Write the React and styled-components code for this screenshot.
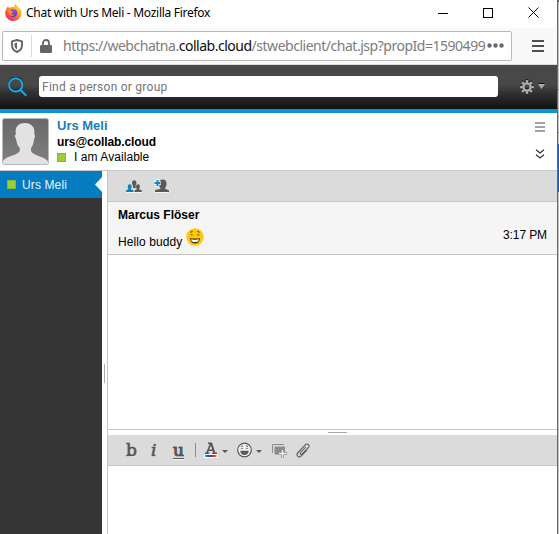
import React from "react";
import styled, { createGlobalStyle } from "styled-components";

const GlobalStyle = createGlobalStyle`
  * { box-sizing: border-box; }
  html, body { margin: 0; overflow: hidden; background: #fff; }
  svg { display: block; flex: none; }
`;

const Screen = styled.div`
  display: grid;
  grid-template-columns: 557px 1px 1px;
  width: 559px;
  height: 534px;
  overflow: hidden;
  font-family: "Liberation Sans", Arial, sans-serif;
  font-size: 12px;
  color: #000;
`;

const Window = styled.div`
  display: flex;
  flex-direction: column;
  min-width: 0;
  height: 534px;
  background: #fff;
`;

const WindowEdge = styled.div`
  background: #686868;
`;

const Desktop = styled.div`
  background: linear-gradient(
    #35577c 0 2px, #c3c3c3 2px 89px, #8f8f8f 89px 90px, #c3c3c3 90px 132px,
    #8f8f8f 132px 133px, #c3c3c3 133px 144px, #1f5ba8 144px 192px, #c3c3c3 192px
  );
`;

const TitleBar = styled.header`
  display: flex;
  align-items: center;
  flex: none;
  height: 28px;
  padding: 0 18px 3px 5px;
`;

const WindowTitle = styled.div`
  flex: 1;
  margin-left: 4px;
  font: 12px/16px "Noto Sans", "Open Sans", sans-serif;
  letter-spacing: -0.28px;
  white-space: nowrap;
`;

const WindowControls = styled.div`
  display: flex;
  align-items: center;
  gap: 35px;
`;

const AddressBar = styled.div`
  display: flex;
  align-items: center;
  flex: none;
  height: 37px;
  padding: 0 13px 1px 2px;
  border-bottom: 1px solid #dcdcdc;
  background: #f9f9fa;
`;

const UrlField = styled.div`
  display: flex;
  align-items: center;
  width: 510px;
  height: 30px;
  margin-right: 20px;
  padding: 0 5px 0 8px;
  border: 1px solid #b9b9bb;
  border-radius: 2px;
  background: #fff;
`;

const UrlDivider = styled.i`
  width: 1px;
  height: 22px;
  margin: 0 8px 0 8px;
  background: #dcdcdc;
`;

const Url = styled.div`
  flex: 1;
  min-width: 0;
  margin-left: 11px;
  font: 14px/20px "Noto Sans", "Open Sans", sans-serif;
  letter-spacing: -0.48px;
  white-space: nowrap;
  color: #7c7c7c;
`;

const Domain = styled.span`
  color: #0c0c0d;
`;

const SearchHeader = styled.div`
  display: flex;
  align-items: center;
  flex: none;
  height: 48px;
  padding: 0 12px 1px 8px;
  border-bottom: 4px solid #0b93d4;
  background: linear-gradient(#484848 0 20px, #333 27px, #111 44px);
  box-shadow: inset 0 -1px #111;
`;

const SearchInput = styled.input`
  width: 459px;
  height: 21px;
  margin: 0 22px 0 12px;
  padding: 0 3px;
  border: 0;
  border-radius: 3px;
  background: #fff;
  font: 12px "Roboto", sans-serif;
  letter-spacing: 0.25px;
  &::placeholder { color: #757575; opacity: 1; }
`;

const Contact = styled.section`
  display: flex;
  flex: none;
  height: 58px;
  padding: 5px 12px 0 2px;
  border-bottom: 1px solid #c6c6c6;
`;

const ContactInfo = styled.div`
  display: flex;
  flex: 1;
  flex-direction: column;
  margin-left: 8px;
`;

const ContactName = styled.div`
  height: 16px;
  font: bold 13px/16px "Liberation Sans", Arial, sans-serif;
  color: #1a7fb8;
`;

const ContactMail = styled.div`
  height: 15px;
  font-weight: bold;
  line-height: 16px;
  letter-spacing: -0.08px;
`;

const ContactStatus = styled.div`
  display: flex;
  align-items: center;
  gap: 8px;
  height: 16px;
  line-height: 16px;
  letter-spacing: 0.06px;
`;

const Presence = styled.i`
  width: 9px;
  height: 9px;
  border: 1px solid #86b62b;
  background: #9cce38;
`;

const ContactActions = styled.div`
  display: flex;
  flex-direction: column;
  align-items: flex-end;
  gap: 17px;
  padding-top: 4px;
`;

const Workspace = styled.div`
  display: grid;
  grid-template-columns: 102px 5px 1fr;
  flex: 1;
  min-height: 0;
`;

const Sidebar = styled.nav`
  background: #353535;
`;

const ChatTab = styled.div`
  display: flex;
  align-items: center;
  height: 27px;
  padding-left: 7px;
  background: #057cc0;
  color: #fff;
`;

const TabLabel = styled.span`
  flex: 1;
  margin-left: 6px;
  color: #e9f4fb;
  letter-spacing: 0.12px;
`;

const Splitter = styled.div`
  display: flex;
  justify-content: center;
  padding-top: 193px;
`;

const SplitterGrip = styled.i`
  width: 1px;
  height: 19px;
  background: #ababab;
`;

const ChatPane = styled.main`
  display: flex;
  flex-direction: column;
  min-width: 0;
  border-left: 1px solid #c6c6c6;
`;

const Toolbar = styled.div`
  display: flex;
  align-items: center;
  flex: none;
  height: 31px;
  padding-left: ${(p) => p.$inset}px;
  border-bottom: 1px solid #c6c6c6;
  background: #dbdbdb;
`;

const Message = styled.article`
  display: flex;
  flex: none;
  justify-content: space-between;
  height: 53px;
  padding: 5px 10px 0;
  border-bottom: 1px solid #c6c6c6;
  background: #f5f5f5;
`;

const Author = styled.div`
  font-weight: bold;
  line-height: 16px;
`;

const MessageText = styled.div`
  display: flex;
  gap: 4px;
  padding-top: 5px;
  line-height: 29px;
  letter-spacing: 0.1px;
`;

const Time = styled.time`
  padding-top: 20px;
  line-height: 16px;
  letter-spacing: -0.1px;
`;

const History = styled.div`
  flex: none;
  height: 175px;
  border-bottom: 1px solid #c6c6c6;
`;

const ComposeGrip = styled.div`
  display: flex;
  flex: none;
  height: 5px;
  padding: 2px 0 0 220px;
  &::before { content: ""; width: 19px; height: 1px; background: #ababab; }
`;

const FormatButton = styled.button`
  width: ${(p) => p.$width}px;
  height: 20px;
  padding: 0;
  border: 0;
  background: none;
  color: #555;
  font: ${(p) => (p.$italic ? "italic " : "")}17px/20px "DejaVu Serif", serif;
  -webkit-text-stroke: 0.7px #555;
  text-shadow: 0 1px #f4f4f4;
  text-decoration: ${(p) => (p.$underline ? "underline" : "none")};
  text-decoration-thickness: 1px;
  text-underline-offset: 2px;
  text-align: left;
`;

const FormatDivider = styled.i`
  width: 1px;
  height: 14px;
  margin-right: 8px;
  background: #8b8b8b;
`;

const IconSlot = styled.span`
  margin-right: ${(p) => p.$after}px;
`;

const FirefoxIcon = () => (
  <svg width="17" height="17" viewBox="0 0 17 17">
    <defs>
      <linearGradient id="fox" x1="1" y1="0" x2="0.25" y2="1">
        <stop offset="0" stopColor="#fff044" />
        <stop offset=".35" stopColor="#ffb52c" />
        <stop offset=".65" stopColor="#ff6c35" />
        <stop offset="1" stopColor="#ef2463" />
      </linearGradient>
      <linearGradient id="globe" x1="0" y1="0" x2="0" y2="1">
        <stop offset="0" stopColor="#9a48e4" />
        <stop offset="1" stopColor="#5142b4" />
      </linearGradient>
    </defs>
    <path d="M3 2.200C3.300 3 3.700 3.400 4.300 3.800 6 2.800 7.600 3 8.700 3.200 8.800 1.800 9.600.6 10.800 0c.5 2 3.200 2.900 3.700 5 .2-.3.2-.9.1-1.300C16.500 6 17.100 9 16 11.800c-1.200 3-4 5.200-7.400 5.200C4 17 .2 13.600.2 9.200.2 6.500 1.300 4.200 3 2.200z" fill="url(#fox)" />
    <path d="M5.200 6.600C6.600 4.700 9.800 4.700 11.500 6.600c2 2.500.6 6.400-2.900 6.600-2.800.1-4.600-2-4.300-4.300 1 .6 2.300.3 3.300-.6-.9-.2-1.900-.7-2.400-1.700z" fill="url(#globe)" />
    <path d="M2.800 6.200C4 5.800 5 6 5.800 6.700 6.800 7 8 7.200 8.600 7.700 7.500 8 7 9.100 5.900 9.400c.7 1.200 2.500 1.500 3.800.8-1.500 2.600-5.700 1.900-6.300-1z" fill="#ff9228" />
  </svg>
);

const MinimizeIcon = () => (
  <svg width="10" height="10"><path d="M0 5.500h10" stroke="#000" /></svg>
);
const MaximizeIcon = () => (
  <svg width="10" height="10"><rect x=".5" y=".5" width="9" height="9" fill="none" stroke="#000" /></svg>
);
const CloseIcon = () => (
  <svg width="11" height="11"><path d="M.5.5l10 10M10.500.5l-10 10" stroke="#000" fill="none" /></svg>
);

const ShieldIcon = () => (
  <svg width="12" height="14" viewBox="0 0 12 14">
    <path d="M6 1L11 2.300V6c0 3.500-2 5.900-5 7C3 11.900 1 9.500 1 6V2.300z" fill="none" stroke="#656565" strokeWidth="1.900" strokeLinejoin="round" />
    <path d="M6 3.500v7C4.200 9.400 3.500 8 3.500 6V4.200z" fill="#656565" />
  </svg>
);
const LockIcon = () => (
  <svg width="12" height="14" viewBox="0 0 12 14">
    <path d="M3 7V4a3 3 0 0 1 6 0v3" fill="none" stroke="#656565" strokeWidth="1.800" />
    <rect y="6" width="12" height="8" rx="1.300" fill="#656565" />
  </svg>
);
const DotsIcon = () => (
  <svg width="19" height="5" fill="#6a6a6a">
    <circle cx="2.500" cy="2.500" r="2.200" /><circle cx="8.500" cy="2.500" r="2.200" /><circle cx="14.500" cy="2.500" r="2.200" />
  </svg>
);
const BrowserMenuIcon = () => (
  <svg width="12" height="12" fill="#4e4e4e">
    <path d="M0 0h12v2H0zM0 5h12v2H0zM0 10h12v2H0z" />
  </svg>
);
const SearchIcon = () => (
  <svg width="19" height="20" viewBox="0 0 19 20" fill="none">
    <circle cx="7.700" cy="7" r="6.600" stroke="#111" strokeWidth="2" />
    <circle cx="7.700" cy="7.800" r="6.600" stroke="#12a7ed" strokeWidth="2" />
    <path d="M12.300 12.800l6 6" stroke="#12a7ed" strokeWidth="2" />
  </svg>
);
const Gear = ({ y, color }) => (
  <g transform={`translate(7 ${y})`} stroke={color} fill="none">
    <circle r="3.600" strokeWidth="2.400" />
    {[0, 45, 90, 135, 180, 225, 270, 315].map((a) => (
      <path key={a} d="M0-4v-2.900" strokeWidth="2.300" transform={`rotate(${a})`} />
    ))}
  </g>
);
const SettingsIcon = () => (
  <svg width="25" height="16" viewBox="0 0 25 16">
    <Gear y={7} color="#151515" />
    <Gear y={8} color="#aaa" />
    <path d="M18 4h7l-3.500 5z" fill="#151515" />
    <path d="M18 5h7l-3.500 5z" fill="#aaa" />
  </svg>
);
const Avatar = () => (
  <svg width="47" height="47" viewBox="0 0 47 47">
    <defs>
      <linearGradient id="backdrop" x2="0" y2="1">
        <stop stopColor="#686868" /><stop offset="1" stopColor="#818181" />
      </linearGradient>
    </defs>
    <rect x=".5" y=".5" width="46" height="46" rx="2" fill="url(#backdrop)" stroke="#b8b8b8" />
    <path d="M1 46V43C3 38.500 17 37 17.800 32.800V30C14.500 27 14.800 22 13.300 19.500c-.8-1.500-.2-3 .6-3C12.500 8 17 5 23 5s10.500 4 9.300 11.500c1 .3 1 2 .2 3.200-1 3-.8 7.300-3.500 10.300v2.800C30 37.500 44 39 46 43.500V46z" fill="#e2e2e2" />
  </svg>
);
const ListIcon = () => (
  <svg width="10" height="10"><path d="M0 1h10M0 5h10M0 9h10" stroke="#a3a3a3" strokeWidth="2" /></svg>
);
const ChevronsIcon = () => (
  <svg width="10" height="10" viewBox="0 0 10 10" fill="none" stroke="#303030" strokeWidth="1.200">
    <path d="M1 .7l4 3.300 4-3.300M1 5.700L5 9l4-3.300" />
  </svg>
);
const TabArrow = () => (
  <svg width="7" height="15"><path d="M7 0v15L0 7.500z" fill="#f5f5f5" /></svg>
);
const PeopleIcon = () => (
  <svg width="16" height="13" viewBox="0 0 16 13">
    <path d="M6 3a2.200 2.800 0 0 1 4.400 0c0 1.200-.4 1.900-.8 2.500l.2 2.500H7V5.500C6.400 4.900 6 4 6 3z" fill="#5a5a5a" />
    <path d="M0 12v-1.200C.2 9.800 2.300 9.800 2.700 9 1.900 8.300 1.700 7.300 1.800 6.200a1.900 1.900 0 0 1 3.800 0c.1 1.100-.2 2-.9 2.800.5.800 2.400.9 2.700 1.800V12z" fill="#0a7fc1" />
    <path d="M8.500 12v-1.200c.2-1 2.100-1 2.500-1.800-.8-.7-1-1.700-.9-2.800a1.900 1.900 0 0 1 3.800 0c.1 1.100-.2 2-.9 2.800.5.800 2.600.9 2.800 1.800V12z" fill="#5a5a5a" />
    <path d="M0 12.500h16" stroke="#f4f4f4" />
  </svg>
);
const AddPersonIcon = () => (
  <svg width="15" height="15" viewBox="0 0 15 15">
    <path d="M1 13v-1.500C2 10 5.500 10.800 6.500 9.500 5 7.500 4.800 5.500 5 4c.2-2.400 1.600-3.500 3.800-3.500S12.500 2 12.500 4.500c0 1.800-.4 3.200-1.600 4.800.4 1.500 3.300.9 4.100 2.500V13z" fill="#5a5a5a" />
    <path d="M3.500 0v7.500M0 4h7" stroke="#fff" strokeWidth="3.400" />
    <path d="M3.500 1v6M.5 4h6" stroke="#0a86c9" strokeWidth="2" />
    <path d="M1 13.500h14" stroke="#f4f4f4" />
  </svg>
);
const EmojiIcon = () => (
  <svg width="18" height="18" viewBox="0 0 18 18">
    <circle cx="9" cy="9" r="8.700" fill="#ffc90b" />
    <path d="M3.800 10c2.500.8 7.900.8 10.400 0-.3 3.500-2.400 5.500-5.200 5.500s-4.900-2-5.200-5.500z" fill="#393326" />
    <path d="M4.800 11.200c2 .6 6.400.6 8.400 0-.4 2-2.200 2.900-4.200 2.900s-3.800-.9-4.200-2.900z" fill="#fff" />
    <path d="M4.300 4.300l2.300-.9M13.700 4.300l-2.300-.9M4.500 7.300c.4-1 1.800-1 2.200 0M11.300 7.300c.4-1 1.800-1 2.200 0" stroke="#4a3a15" strokeWidth="1" fill="none" />
  </svg>
);
const TextColorIcon = () => (
  <svg width="24" height="17" viewBox="0 0 24 17">
    <defs>
      <linearGradient id="spectrum">
        <stop stopColor="#00afeb" /><stop offset=".3" stopColor="#115bac" />
        <stop offset=".6" stopColor="#a41b72" /><stop offset=".8" stopColor="#ee353f" /><stop offset="1" stopColor="#ffd62d" />
      </linearGradient>
    </defs>
    <path d="M4 .5h4l3.200 10H13V12H8.300v-1.500h1L8.800 9H4.600L4 10.500h1.200V12H1v-1.500h1.300L5.600 2H4zM6.800 3.500L5.100 7.600h3.200z" fill="#555" fillRule="evenodd" />
    <rect y="12" width="14" height="4" fill="#fff" />
    <rect x="1" y="13" width="12" height="2" fill="url(#spectrum)" />
    <path d="M18 8h6l-3 3z" fill="#5a5a5a" />
  </svg>
);
const SmileyIcon = () => (
  <svg width="25" height="16" viewBox="0 0 25 16">
    <circle cx="7.500" cy="8" r="6.800" fill="#f1f1f1" stroke="#595959" strokeWidth="1.200" />
    <path d="M4 4.500l2-.8M11 4.500l-2-.8M4 6.800c.5-.8 1.500-.8 2 0M9 6.800c.5-.8 1.500-.8 2 0" stroke="#595959" fill="none" />
    <path d="M3.300 8.800h8.400c0 2.700-1.700 4.200-4.200 4.200s-4.200-1.500-4.200-4.200z" fill="#595959" />
    <path d="M19 8h6l-3 3z" fill="#5a5a5a" />
  </svg>
);
const ScreenshotIcon = () => (
  <svg width="16" height="15" viewBox="0 0 16 15" fill="none">
    <path d="M.5 10V1.500H12" stroke="#8c8c8c" />
    <path d="M2.500 3.500h10.500v8H2.500z" fill="#8c8c8c" />
    <path d="M10.500 6v8.500M6.500 10.500h8.500" stroke="#8c8c8c" strokeWidth="3" />
    <path d="M10.500 7v7M7 10.500h7.500" stroke="#f3f3f3" strokeWidth="1.300" />
  </svg>
);
const ClipIcon = () => (
  <svg width="14" height="15" viewBox="0 0 14 15" fill="none" stroke="#5c5c5c" strokeWidth="1.100">
    <path d="M9.800 4L4.700 9.500c-1.200 1.300.3 2.800 1.600 1.500l6-6.300c2.200-2.400-.8-4.900-3-2.800L2 9.500c-2.600 2.700.6 5.900 3.300 3.300L11 7" />
  </svg>
);

export default function App() {
  return (
    <>
      <GlobalStyle />
      <Screen>
        <Window>
          <TitleBar>
            <FirefoxIcon />
            <WindowTitle>Chat with Urs Meli - Mozilla Firefox</WindowTitle>
            <WindowControls>
              <MinimizeIcon /><MaximizeIcon /><CloseIcon />
            </WindowControls>
          </TitleBar>
          <AddressBar>
            <UrlField>
              <ShieldIcon /><UrlDivider /><LockIcon />
              <Url>https://webchatna.<Domain>collab.cloud</Domain>/stwebclient/chat.jsp?propId=1590499</Url>
              <DotsIcon />
            </UrlField>
            <BrowserMenuIcon />
          </AddressBar>
          <SearchHeader>
            <SearchIcon />
            <SearchInput placeholder="Find a person or group" />
            <SettingsIcon />
          </SearchHeader>
          <Contact>
            <Avatar />
            <ContactInfo>
              <ContactName>Urs Meli</ContactName>
              <ContactMail>urs@collab.cloud</ContactMail>
              <ContactStatus><Presence />I am Available</ContactStatus>
            </ContactInfo>
            <ContactActions><ListIcon /><ChevronsIcon /></ContactActions>
          </Contact>
          <Workspace>
            <Sidebar>
              <ChatTab><Presence /><TabLabel>Urs Meli</TabLabel><TabArrow /></ChatTab>
            </Sidebar>
            <Splitter><SplitterGrip /></Splitter>
            <ChatPane>
              <Toolbar $inset={18}>
                <IconSlot $after={12}><PeopleIcon /></IconSlot>
                <AddPersonIcon />
              </Toolbar>
              <Message>
                <div>
                  <Author>Marcus Flöser</Author>
                  <MessageText>Hello buddy <EmojiIcon /></MessageText>
                </div>
                <Time>3:17 PM</Time>
              </Message>
              <History />
              <ComposeGrip />
              <Toolbar $inset={18}>
                <FormatButton $width={25}>b</FormatButton>
                <FormatButton $width={22} $italic>i</FormatButton>
                <FormatButton $width={22} $underline>u</FormatButton>
                <FormatDivider />
                <IconSlot $after={9}><TextColorIcon /></IconSlot>
                <IconSlot $after={10}><SmileyIcon /></IconSlot>
                <IconSlot $after={8}><ScreenshotIcon /></IconSlot>
                <ClipIcon />
              </Toolbar>
            </ChatPane>
          </Workspace>
        </Window>
        <WindowEdge />
        <Desktop />
      </Screen>
    </>
  );
}
